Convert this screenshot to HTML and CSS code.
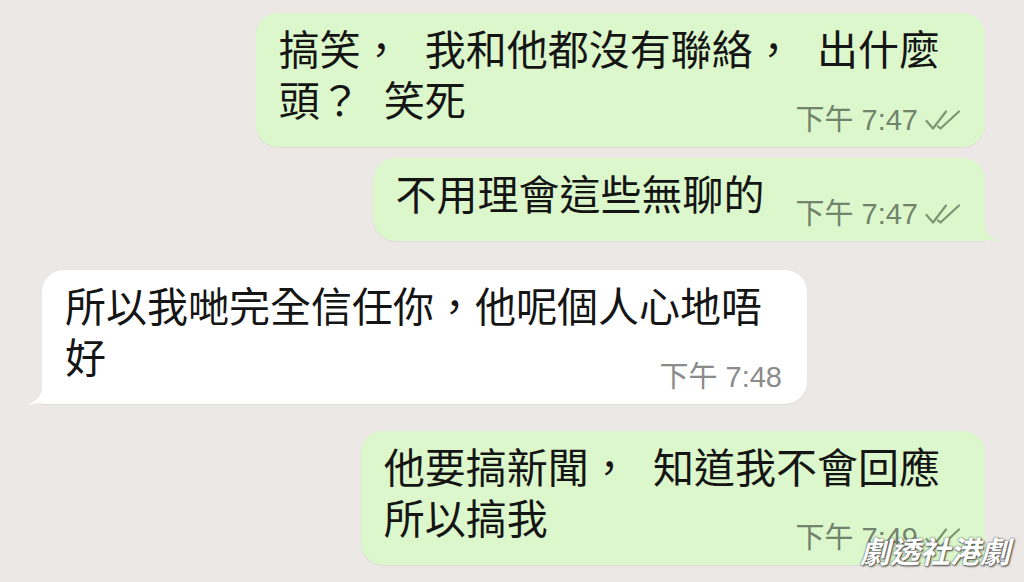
FILE: index.html
```html
<!DOCTYPE html>
<html lang="zh-Hant">
<head>
    <meta charset="UTF-8">
    <meta name="viewport" content="width=device-width, initial-scale=1.0">
    <title>Chat</title>
    <link rel="stylesheet" href="styles.css">
</head>
<body>
    <div class="chat">
        <div class="row out">
            <div class="bubble green">
                <div class="line">搞笑， 我和他都沒有聯絡， 出什麼</div>
                <div class="line last">
                    <span>頭？ 笑死</span>
                    <span class="meta">下午 7:47<svg class="ticks" viewBox="0 0 35 20"><path d="M1.5 11 L8 18.5 L21 1.5 M13 16.5 L15.5 18.5 L34 1.5"/></svg></span>
                </div>
            </div>
        </div>

        <div class="row out">
            <div class="bubble green tail">
                <div class="line last">
                    <span>不用理會這些無聊的</span>
                    <span class="meta">下午 7:47<svg class="ticks" viewBox="0 0 35 20"><path d="M1.5 11 L8 18.5 L21 1.5 M13 16.5 L15.5 18.5 L34 1.5"/></svg></span>
                </div>
                <svg class="tail-right" viewBox="0 0 16 22"><path d="M0 0 C0 9 4 18 16 22 C10 22 5 19 0 20 Z"/></svg>
            </div>
        </div>

        <div class="row in">
            <div class="bubble white tail">
                <div class="line">所以我哋完全信任你，他呢個人心地唔</div>
                <div class="line last">
                    <span>好</span>
                    <span class="meta">下午 7:48</span>
                </div>
                <svg class="tail-left" viewBox="0 0 16 22"><path d="M16 0 C16 9 12 18 0 22 C6 22 11 19 16 20 Z"/></svg>
            </div>
        </div>

        <div class="row out">
            <div class="bubble green tail">
                <div class="line">他要搞新聞， 知道我不會回應</div>
                <div class="line last">
                    <span>所以搞我</span>
                    <span class="meta">下午 7:49<svg class="ticks" viewBox="0 0 35 20"><path d="M1.5 11 L8 18.5 L21 1.5 M13 16.5 L15.5 18.5 L34 1.5"/></svg></span>
                </div>
                <svg class="tail-right" viewBox="0 0 16 22"><path d="M0 0 C0 9 4 18 16 22 C10 22 5 19 0 20 Z"/></svg>
            </div>
        </div>
    </div>

    <div class="watermark">劇透社港劇</div>
</body>
</html>
```

FILE: styles.css
```css
html, body {
    margin: 0;
    padding: 0;
    height: 100%;
}

body {
    background-color: #ebe8e5;
    font-family: "Noto Sans CJK TC", "Noto Sans", sans-serif;
    color: #151515;
    overflow: hidden;
    position: relative;
}

.chat {
    padding-top: 13px;
    display: flex;
    flex-direction: column;
}

.row {
    display: flex;
    margin-bottom: 11px;
}

.row.out {
    justify-content: flex-end;
    padding-right: 39px;
}

.row.in {
    justify-content: flex-start;
    padding-left: 42px;
    margin-top: 18px;
    margin-bottom: 27px;
}

.bubble {
    position: relative;
    padding: 9px 25px 23px 23px;
    border-radius: 22px;
    font-size: 41px;
    line-height: 51px;
    word-spacing: 14px;
    box-shadow: 0 1px 1px rgba(0, 0, 0, 0.06);
}

.green {
    background-color: #dcf7cb;
}

.white {
    background-color: #ffffff;
}

.line {
    white-space: nowrap;
    padding-right: 20px;
}

.line.last {
    display: flex;
    justify-content: space-between;
    align-items: flex-end;
    gap: 31px;
    padding-right: 0;
}

.meta {
    display: flex;
    align-items: center;
    font-family: "Liberation Sans", "Noto Sans CJK TC", sans-serif;
    font-size: 29px;
    line-height: 34px;
    word-spacing: 0;
    color: #72846d;
    margin-bottom: -13px;
}

.white .meta {
    color: #8b8b8b;
}

.ticks {
    width: 35px;
    height: 20px;
    margin-left: 7px;
    fill: none;
    stroke: #7b9575;
    stroke-width: 2.2;
    stroke-linecap: round;
    stroke-linejoin: round;
}

/* bubble tails */
.green.tail {
    border-bottom-right-radius: 0;
}

.white.tail {
    border-bottom-left-radius: 0;
}

.tail-right, .tail-left {
    position: absolute;
    bottom: -1px;
    width: 16px;
    height: 22px;
}

.tail-right {
    right: -15px;
    fill: #dcf7cb;
}

.tail-left {
    left: -15px;
    fill: #ffffff;
}

.watermark {
    position: absolute;
    right: 14px;
    bottom: 10px;
    font-size: 30px;
    font-style: italic;
    font-weight: bold;
    color: #ffffff;
    text-shadow: 0 0 2px #4a4a4a, 1px 1px 2px #4a4a4a;
}
```
